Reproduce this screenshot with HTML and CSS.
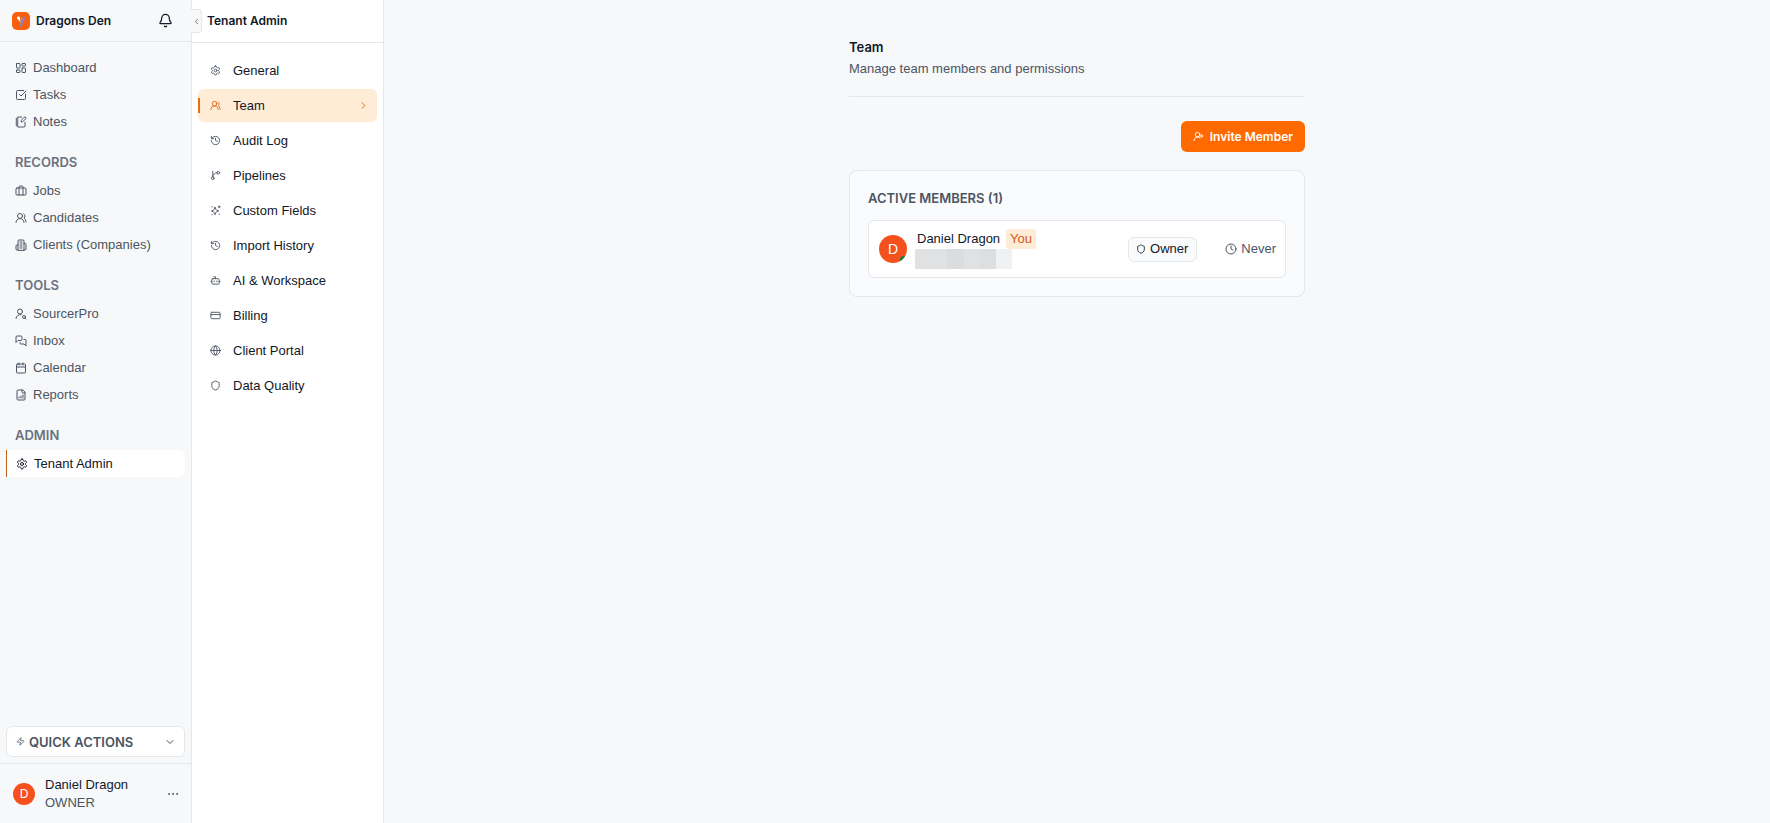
FILE: index.html
```html
<!DOCTYPE html>
<html lang="en">

<head>
    <meta charset="UTF-8">
    <meta name="viewport" content="width=device-width, initial-scale=1">
    <link rel="stylesheet" href="styles.css">
    <title>Team - Tenant Admin</title>
</head>

<body>
    <!-- icon set, used below with <use> -->
    <svg class="sprite" aria-hidden="true">
        <symbol id="i-dashboard" viewBox="0 0 24 24"><rect x="3" y="3" width="7" height="9" rx="1"/><rect x="14" y="3" width="7" height="5" rx="1"/><rect x="14" y="12" width="7" height="9" rx="1"/><rect x="3" y="16" width="7" height="5" rx="1"/></symbol>
        <symbol id="i-tasks" viewBox="0 0 24 24"><path d="M21 10.500V19a2 2 0 0 1-2 2H5a2 2 0 0 1-2-2V5a2 2 0 0 1 2-2h12.500"/><path d="m9 11 3 3L22 4"/></symbol>
        <symbol id="i-notes" viewBox="0 0 24 24"><path d="M13.400 2H6a2 2 0 0 0-2 2v16a2 2 0 0 0 2 2h12a2 2 0 0 0 2-2v-7.400"/><path d="M2 6h4M2 10h4M2 14h4M2 18h4"/><path d="M21.378 5.626a1 1 0 1 0-3.004-3.004l-5.010 5.012a2 2 0 0 0-.506.854l-.837 2.870a.5.5 0 0 0 .620.620l2.870-.837a2 2 0 0 0 .854-.506z"/></symbol>
        <symbol id="i-jobs" viewBox="0 0 24 24"><path d="M16 20V4a2 2 0 0 0-2-2h-4a2 2 0 0 0-2 2v16"/><rect x="2" y="6" width="20" height="14" rx="2"/></symbol>
        <symbol id="i-users" viewBox="0 0 24 24"><path d="M18 21a8 8 0 0 0-16 0"/><circle cx="10" cy="8" r="5"/><path d="M22 20c0-3.370-2-6.500-4-8a5 5 0 0 0-.450-8.300"/></symbol>
        <symbol id="i-clients" viewBox="0 0 24 24"><path d="M6 22V4a2 2 0 0 1 2-2h8a2 2 0 0 1 2 2v18Z"/><path d="M6 12H4a2 2 0 0 0-2 2v6a2 2 0 0 0 2 2h2M18 9h2a2 2 0 0 1 2 2v9a2 2 0 0 1-2 2h-2M10 6h4M10 10h4M10 14h4M10 18h4"/></symbol>
        <symbol id="i-sourcer" viewBox="0 0 24 24"><circle cx="10" cy="7" r="5"/><path d="M2 21a8 8 0 0 1 10.400-7.600"/><circle cx="18" cy="18" r="3"/><path d="m22 22-1.900-1.900"/></symbol>
        <symbol id="i-inbox" viewBox="0 0 24 24"><path d="M14 9a2 2 0 0 1-2 2H6l-4 4V4a2 2 0 0 1 2-2h8a2 2 0 0 1 2 2z"/><path d="M18 9h2a2 2 0 0 1 2 2v11l-4-4h-6a2 2 0 0 1-2-2v-1"/></symbol>
        <symbol id="i-calendar" viewBox="0 0 24 24"><path d="M8 2v4M16 2v4M3 10h18"/><rect x="3" y="4" width="18" height="18" rx="2"/></symbol>
        <symbol id="i-reports" viewBox="0 0 24 24"><path d="M15 2H6a2 2 0 0 0-2 2v16a2 2 0 0 0 2 2h12a2 2 0 0 0 2-2V7Z"/><path d="M14 2v4a2 2 0 0 0 2 2h4M8 18v-2M12 18v-4M16 18v-6"/></symbol>
        <symbol id="i-gear" viewBox="0 0 24 24"><path d="M12.220 2h-.440a2 2 0 0 0-2 2v.180a2 2 0 0 1-1 1.730l-.430.250a2 2 0 0 1-2 0l-.150-.080a2 2 0 0 0-2.730.730l-.220.380a2 2 0 0 0 .730 2.730l.150.100a2 2 0 0 1 1 1.720v.510a2 2 0 0 1-1 1.740l-.150.090a2 2 0 0 0-.730 2.730l.220.380a2 2 0 0 0 2.730.730l.150-.080a2 2 0 0 1 2 0l.430.250a2 2 0 0 1 1 1.730V20a2 2 0 0 0 2 2h.440a2 2 0 0 0 2-2v-.180a2 2 0 0 1 1-1.730l.430-.250a2 2 0 0 1 2 0l.150.080a2 2 0 0 0 2.730-.730l.220-.390a2 2 0 0 0-.730-2.730l-.150-.080a2 2 0 0 1-1-1.740v-.500a2 2 0 0 1 1-1.740l.150-.090a2 2 0 0 0 .730-2.730l-.220-.380a2 2 0 0 0-2.730-.730l-.150.080a2 2 0 0 1-2 0l-.430-.250a2 2 0 0 1-1-1.730V4a2 2 0 0 0-2-2z"/><circle cx="12" cy="12" r="3"/></symbol>
        <symbol id="i-history" viewBox="0 0 24 24"><path d="M3 12a9 9 0 1 0 9-9 9.750 9.750 0 0 0-6.740 2.740L3 8"/><path d="M3 3v5h5M12 7v5l4 2"/></symbol>
        <symbol id="i-branch" viewBox="0 0 24 24"><path d="M6 3v12"/><circle cx="18" cy="6" r="3"/><circle cx="6" cy="18" r="3"/><path d="M15 6a9 9 0 0 0-9 9"/></symbol>
        <symbol id="i-sparkles" viewBox="0 0 24 24"><path d="M11 5l1.900 4.600a3 3 0 0 0 1.500 1.500L19 13l-4.600 1.900a3 3 0 0 0-1.500 1.500L11 21l-1.900-4.600a3 3 0 0 0-1.500-1.500L3 13l4.600-1.900a3 3 0 0 0 1.500-1.500z"/><path d="M20 2v4M22 4h-4M4 4h1M4 21h1M20 20h1"/></symbol>
        <symbol id="i-bot" viewBox="0 0 24 24"><path d="M12 8V4H8M2 14h2M20 14h2M15 13v2M9 13v2"/><rect x="4" y="8" width="16" height="12" rx="2"/></symbol>
        <symbol id="i-card" viewBox="0 0 24 24"><rect x="2" y="5" width="20" height="14" rx="2"/><path d="M2 10h20"/></symbol>
        <symbol id="i-globe" viewBox="0 0 24 24"><circle cx="12" cy="12" r="10"/><path d="M12 2a14.500 14.500 0 0 0 0 20 14.500 14.500 0 0 0 0-20M2 12h20"/></symbol>
        <symbol id="i-shield" viewBox="0 0 24 24"><path d="M20 13c0 5-3.500 7.500-7.660 8.950a1 1 0 0 1-.670-.010C7.500 20.500 4 18 4 13V6a1 1 0 0 1 1-1c2 0 4.500-1.200 6.240-2.720a1.170 1.170 0 0 1 1.520 0C14.510 3.810 17 5 19 5a1 1 0 0 1 1 1z"/></symbol>
        <symbol id="i-bell" viewBox="0 0 24 24"><path d="M10.268 21a2 2 0 0 0 3.464 0"/><path d="M3.262 15.326A1 1 0 0 0 4 17h16a1 1 0 0 0 .740-1.673C19.410 13.956 18 12.499 18 8A6 6 0 0 0 6 8c0 4.499-1.411 5.956-2.738 7.326"/></symbol>
        <symbol id="i-left" viewBox="0 0 24 24"><path d="m15 18-6-6 6-6"/></symbol>
        <symbol id="i-right" viewBox="0 0 24 24"><path d="m9 18 6-6-6-6"/></symbol>
        <symbol id="i-down" viewBox="0 0 24 24"><path d="m6 9 6 6 6-6"/></symbol>
        <symbol id="i-zap" viewBox="0 0 24 24"><path d="M4 14a1 1 0 0 1-.780-1.630l9.900-10.200a.5.5 0 0 1 .860.460l-1.920 6.020A1 1 0 0 0 13 10h7a1 1 0 0 1 .780 1.630l-9.900 10.200a.5.5 0 0 1-.860-.460l1.920-6.020A1 1 0 0 0 11 14z"/></symbol>
        <symbol id="i-dots" viewBox="0 0 24 24"><circle cx="12" cy="12" r="1"/><circle cx="20" cy="12" r="1"/><circle cx="4" cy="12" r="1"/></symbol>
        <symbol id="i-invite" viewBox="0 0 24 24"><path d="M2 21a8 8 0 0 1 13.300-6"/><circle cx="10" cy="8" r="5"/><path d="M19 8v6M22 11h-6"/></symbol>
        <symbol id="i-clock" viewBox="0 0 24 24"><circle cx="12" cy="12" r="10"/><path d="M12 6v6l4 2"/></symbol>
    </svg>

    <div class="app">
        <aside class="sidebar">
            <header class="brand">
                <svg class="logo" viewBox="0 0 18 18" aria-hidden="true">
                    <rect class="logo-bg" width="18" height="18" rx="5"/>
                    <path class="logo-dot" d="M5 6.500a1.500 1.500 0 0 1 3-1v4z"/>
                    <path class="logo-blue" d="M12 5.500 9 13.500"/>
                    <path class="logo-light" d="M10 5.500 8 10.500"/>
                </svg>
                <span class="brand-name">Dragons Den</span>
                <button class="icon-btn" aria-label="Notifications"><svg class="icon bell"><use href="#i-bell"/></svg></button>
            </header>

            <nav class="nav" aria-label="Main">
                <a href="#"><svg class="icon"><use href="#i-dashboard"/></svg>Dashboard</a>
                <a href="#"><svg class="icon"><use href="#i-tasks"/></svg>Tasks</a>
                <a href="#"><svg class="icon"><use href="#i-notes"/></svg>Notes</a>

                <h2>RECORDS</h2>
                <a href="#"><svg class="icon"><use href="#i-jobs"/></svg>Jobs</a>
                <a href="#"><svg class="icon"><use href="#i-users"/></svg>Candidates</a>
                <a href="#"><svg class="icon"><use href="#i-clients"/></svg>Clients (Companies)</a>

                <h2>TOOLS</h2>
                <a href="#"><svg class="icon"><use href="#i-sourcer"/></svg>SourcerPro</a>
                <a href="#"><svg class="icon"><use href="#i-inbox"/></svg>Inbox</a>
                <a href="#"><svg class="icon"><use href="#i-calendar"/></svg>Calendar</a>
                <a href="#"><svg class="icon"><use href="#i-reports"/></svg>Reports</a>

                <h2>ADMIN</h2>
                <a href="#" class="active"><svg class="icon"><use href="#i-gear"/></svg>Tenant Admin</a>
            </nav>

            <button class="quick-actions">
                <svg class="icon zap"><use href="#i-zap"/></svg>
                <span>QUICK ACTIONS</span>
                <svg class="icon chevron"><use href="#i-down"/></svg>
            </button>

            <footer class="account">
                <span class="avatar avatar-small">D</span>
                <div class="account-text">
                    <div class="account-name">Daniel Dragon</div>
                    <div class="account-role">OWNER</div>
                </div>
                <button class="icon-btn" aria-label="Account menu"><svg class="icon"><use href="#i-dots"/></svg></button>
            </footer>
        </aside>

        <aside class="panel">
            <button class="collapse" aria-label="Collapse sidebar"><svg class="icon"><use href="#i-left"/></svg></button>
            <h1 class="panel-title">Tenant Admin</h1>
            <nav class="panel-nav" aria-label="Tenant Admin">
                <a href="#"><svg class="icon"><use href="#i-gear"/></svg>General</a>
                <a href="#" class="active"><svg class="icon"><use href="#i-users"/></svg>Team<svg class="icon arrow"><use href="#i-right"/></svg></a>
                <a href="#"><svg class="icon"><use href="#i-history"/></svg>Audit Log</a>
                <a href="#"><svg class="icon"><use href="#i-branch"/></svg>Pipelines</a>
                <a href="#"><svg class="icon"><use href="#i-sparkles"/></svg>Custom Fields</a>
                <a href="#"><svg class="icon"><use href="#i-history"/></svg>Import History</a>
                <a href="#"><svg class="icon"><use href="#i-bot"/></svg>AI &amp; Workspace</a>
                <a href="#"><svg class="icon"><use href="#i-card"/></svg>Billing</a>
                <a href="#"><svg class="icon"><use href="#i-globe"/></svg>Client Portal</a>
                <a href="#"><svg class="icon"><use href="#i-shield"/></svg>Data Quality</a>
            </nav>
        </aside>

        <main class="main">
            <div class="content">
                <header class="page-header">
                    <h2>Team</h2>
                    <p>Manage team members and permissions</p>
                </header>

                <button class="invite"><svg class="icon"><use href="#i-invite"/></svg>Invite Member</button>

                <section class="members">
                    <h3>ACTIVE MEMBERS (1)</h3>
                    <div class="member">
                        <div class="avatar avatar-large">D<span class="online"></span></div>
                        <div class="member-info">
                            <div class="member-name">Daniel Dragon <span class="you">You</span></div>
                            <div class="member-email"></div>
                        </div>
                        <span class="role"><svg class="icon"><use href="#i-shield"/></svg>Owner</span>
                        <span class="last-seen"><svg class="icon"><use href="#i-clock"/></svg>Never</span>
                    </div>
                </section>
            </div>
        </main>
    </div>
</body>

</html>
```

FILE: styles.css
```css
* {
    box-sizing: border-box;
}

body {
    margin: 0;
    font-family: "Liberation Sans", Arial, sans-serif;
    font-size: 13px;
    line-height: 18px;
    color: #111827;
    background-color: #f6f8fa;
}

h1,
h2,
h3,
p {
    margin: 0;
    font-size: 13px;
}

h1,
h2,
h3,
.brand-name,
.quick-actions,
.invite {
    font-family: Inter, "Liberation Sans", sans-serif;
    font-weight: 600;
}

a {
    color: inherit;
    text-decoration: none;
}

button {
    font-size: 13px;
    line-height: 18px;
    color: inherit;
    cursor: pointer;
}

.sprite {
    display: none;
}

.icon {
    flex: none;
    width: 12px;
    height: 12px;
    fill: none;
    stroke: currentColor;
    stroke-width: 2;
    stroke-linecap: round;
    stroke-linejoin: round;
}

.icon-btn {
    display: flex;
    padding: 0;
    border: none;
    background: none;
}

.app {
    display: flex;
    min-height: 100vh;
}

/* left sidebar */
.sidebar {
    display: flex;
    flex-direction: column;
    flex: none;
    width: 192px;
    border-right: 1px solid #e4e7eb;
}

.brand {
    display: flex;
    align-items: center;
    gap: 6px;
    height: 42px;
    padding: 0 18px 0 12px;
    border-bottom: 1px solid #e4e7eb;
}

.logo {
    width: 18px;
    height: 18px;
}

.logo-bg {
    fill: #f95f0c;
}

.logo-dot {
    fill: #fff;
}

.logo-blue {
    fill: none;
    stroke: #7f86d6;
    stroke-width: 2;
    stroke-linecap: round;
}

.logo-light {
    fill: none;
    stroke: #b9a6c9;
    stroke-width: 1;
}

.brand-name {
    flex: 1;
    font-size: 12px;
}

.bell {
    width: 15px;
    height: 15px;
}

.nav {
    flex: 1;
    padding: 12px 6px;
    color: #4b5563;
}

.nav a {
    display: flex;
    align-items: center;
    gap: 6px;
    height: 27px;
    padding: 0 9px;
}

.nav h2 {
    margin-top: 15px;
    padding: 0 9px 3px;
    line-height: 24px;
    color: #6b7280;
}

.nav .active {
    color: #111827;
    background-color: #fff;
    border-left: 1px solid #c2611f;
    border-radius: 0 6px 6px 0;
}

.quick-actions {
    display: flex;
    align-items: center;
    gap: 4px;
    height: 31px;
    margin: 0 6px 6px;
    padding: 0 8px 0 9px;
    border: 1px solid #e4e7eb;
    border-radius: 6px;
    background-color: #fff;
    color: #4b5563;
    text-align: left;
}

.quick-actions span {
    flex: 1;
}

.quick-actions .zap {
    width: 9px;
    height: 9px;
}

.account {
    display: flex;
    align-items: center;
    gap: 10px;
    height: 60px;
    padding: 0 12px 0 13px;
    border-top: 1px solid #e4e7eb;
    color: #4b5563;
}

.account-text {
    flex: 1;
}

.account-name {
    color: #111827;
}

.avatar {
    display: flex;
    align-items: center;
    justify-content: center;
    flex: none;
    border-radius: 50%;
    background-color: #f4511e;
    color: #fff;
}

.avatar-small {
    width: 22px;
    height: 22px;
    font-size: 12px;
}

.avatar-large {
    position: relative;
    width: 28px;
    height: 28px;
    font-size: 14px;
    overflow: hidden;
}

.online {
    position: absolute;
    right: 0;
    bottom: 0;
    width: 7px;
    height: 7px;
    border-radius: 50%;
    background-color: #15803d;
}

/* settings menu */
.panel {
    position: relative;
    flex: none;
    width: 192px;
    border-right: 1px solid #e4e7eb;
    background-color: #fff;
}

.collapse {
    position: absolute;
    top: 9px;
    left: -1px;
    display: flex;
    align-items: center;
    justify-content: center;
    width: 11px;
    height: 24px;
    padding: 0;
    border: 1px solid #e4e7eb;
    border-left: none;
    border-radius: 0 4px 4px 0;
    background-color: #f6f8fa;
    color: #4b5563;
}

.collapse .icon {
    width: 9px;
    height: 9px;
}

.panel-title {
    height: 43px;
    padding: 0 15px;
    border-bottom: 1px solid #e4e7eb;
    font-size: 12px;
    line-height: 42px;
}

.panel-nav {
    display: flex;
    flex-direction: column;
    gap: 2px;
    padding: 11px 6px;
}

.panel-nav a {
    display: flex;
    align-items: center;
    gap: 12px;
    height: 33px;
    padding: 0 8px 0 12px;
    border-radius: 6px;
}

.panel-nav .icon {
    width: 11px;
    height: 11px;
    color: #4b5563;
}

.panel-nav .active {
    position: relative;
    background-color: #ffecd6;
}

.panel-nav .active::before {
    content: "";
    position: absolute;
    top: 9px;
    bottom: 9px;
    left: 0;
    width: 2px;
    background-color: #f26a0f;
}

.panel-nav .active .icon {
    color: #e2651b;
}

.panel-nav .arrow {
    margin-left: auto;
}

/* page */
.main {
    flex: 1;
    padding: 36px 24px;
}

.content {
    display: flex;
    flex-direction: column;
    max-width: 456px;
    margin: 0 auto;
}

.page-header {
    padding-bottom: 16px;
    border-bottom: 1px solid #e4e7eb;
}

.page-header h2 {
    font-size: 13px;
    line-height: 22px;
}

.page-header p {
    line-height: 22px;
    color: #4b5563;
}

.invite {
    display: flex;
    align-items: center;
    align-self: flex-end;
    gap: 6px;
    height: 31px;
    margin: 24px 0 18px;
    padding: 0 12px;
    border: none;
    border-radius: 6px;
    background-color: #ff6a00;
    color: #fff;
    font-size: 12px;
}

.invite .icon {
    width: 11px;
    height: 11px;
}

.members {
    padding: 18px;
    border: 1px solid #e4e7eb;
    border-radius: 8px;
    background-color: #fafbfd;
}

.members h3 {
    margin-bottom: 13px;
    color: #4b5563;
}

.member {
    display: flex;
    align-items: center;
    gap: 8px;
    height: 58px;
    padding: 0 9px 0 10px;
    border: 1px solid #e4e7eb;
    border-radius: 6px;
    background-color: #fff;
}

.member-info {
    flex: 1;
}

.member-name {
    display: flex;
    align-items: center;
    gap: 6px;
    padding-left: 2px;
}

.you {
    padding: 1px 4px;
    border-radius: 3px;
    background-color: #ffecd6;
    color: #d4591a;
}

/* hidden email */
.member-email {
    width: 97px;
    height: 20px;
    background: linear-gradient(90deg, #e0e1e2 33%, #dbdcdd 33% 50%, #e0e1e2 50% 67%, #dddedf 67% 83%, #f0f1f2 83%);
}

.role {
    display: flex;
    align-items: center;
    gap: 4px;
    height: 25px;
    margin-right: 20px;
    padding: 0 8px 0 7px;
    border: 1px solid #e4e7eb;
    border-radius: 6px;
    background-color: #fafbfd;
}

.role .icon {
    width: 10px;
    height: 10px;
}

.last-seen {
    display: flex;
    align-items: center;
    gap: 4px;
    color: #4b5563;
}
```
